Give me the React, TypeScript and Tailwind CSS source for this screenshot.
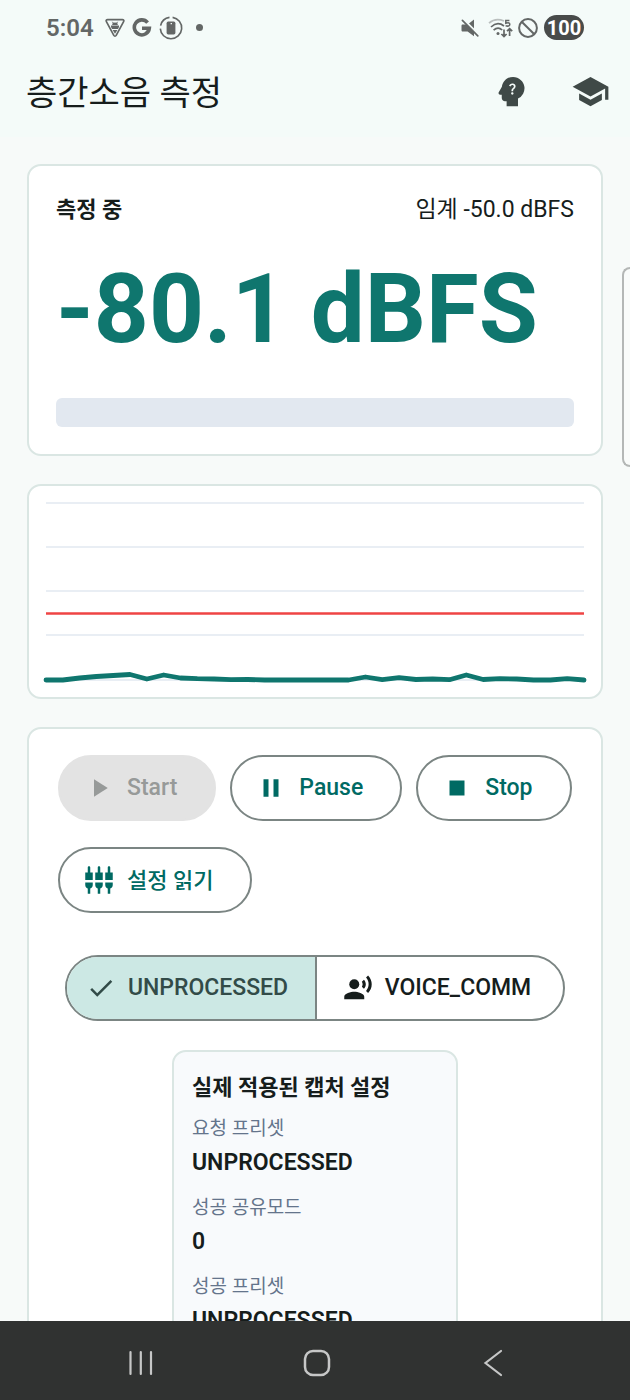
import {
  MdCheck,
  MdPause,
  MdPlayArrow,
  MdPsychologyAlt,
  MdRecordVoiceOver,
  MdSchool,
  MdSettingsInputComponent,
  MdStop,
} from "react-icons/md";
import type { ReactNode } from "react";

// Level history, as the y position inside the 177px high plot area
const LEVELS = [
  177, 177, 175, 173.5, 172.5, 171.5, 176, 172, 175, 175.7, 176, 176.7, 176.5,
  177, 177, 177, 177, 177, 177, 174, 176.7, 174.7, 176.5, 176, 176.7, 172,
  176.5, 175.7, 176, 177, 177, 175.7, 177,
];

const GRID_LINES = [0, 44, 88, 132, 177];

const CAPTURE_SETTINGS = [
  { label: "요청 프리셋", value: "UNPROCESSED" },
  { label: "성공 공유모드", value: "0" },
  { label: "성공 프리셋", value: "UNPROCESSED" },
];

function StatusBar() {
  return (
    <div className="flex h-[55px] shrink-0 items-center justify-between px-[46px] text-[#636766]">
      <div className="flex items-center gap-[7px]">
        <span className="mr-1 text-2xl font-semibold">5:04</span>
        <svg className="h-5 w-5" viewBox="0 0 20 20" fill="none" stroke="currentColor">
          <path
            d="M2.6 1.6h14.8c1.2 0 1.8 1 1.2 2L11.2 17.4c-.6 1-1.8 1-2.4 0L1.4 3.6c-.6-1 0-2 1.2-2z"
            strokeWidth="1.7"
          />
          <path d="M7.2 7a2.8 2.4 0 0 1 5.600 0zM6 7.600h8v1.400l-1 2H7l-1-2zM7.600 12h4.800L10 15.800z" fill="currentColor" stroke="none" />
          <path d="M7.4 3.800l1 1.4M12.6 3.800l-1 1.4" strokeWidth="1" />
        </svg>
        <svg className="h-5 w-5" viewBox="0 0 20 20" fill="none" stroke="currentColor" strokeWidth="3.6">
          <path d="M15.6 4.6A7.5 7.5 0 1 0 17.3 10.2H10" />
        </svg>
        <svg className="h-6 w-6" viewBox="0 0 24 24" fill="none" stroke="currentColor" strokeWidth="1.6">
          <path d="M13.6 1.4A10.7 10.7 0 1 1 1.3 12.6" />
          <path d="M1.6 9.6A10.7 10.7 0 0 1 10.5 1.4" />
          <rect x="7.6" y="5.6" width="8.8" height="12.8" rx="1.6" fill="currentColor" stroke="none" />
          <path d="M11.6 7.600h1.400" stroke="#f4fbf9" strokeWidth="1.2" />
        </svg>
        <span className="ml-1.5 h-[7px] w-[7px] rounded-full bg-[#636766]" />
      </div>

      <div className="flex items-center gap-1">
        <svg className="mr-0.5 h-5 w-5" viewBox="0 0 20 20" fill="currentColor">
          <path d="M8.6 5.8L14 1.6V12zM2.8 6.6h4L14 13.8v4.4L7.6 13.6H2.8c-.8 0-1.300-.5-1.300-1.300V7.900c0-.8.5-1.300 1.300-1.300z" />
          <path d="M3.6 1l15.600 15.600" stroke="#f4fbf9" strokeWidth="1.4" />
          <path d="M2.4 2.4l15.400 15.400" stroke="currentColor" strokeWidth="1.7" strokeLinecap="round" />
        </svg>
        <svg className="h-5 w-7" viewBox="0 0 28 20" fill="none" stroke="currentColor" strokeWidth="1.7">
          <path d="M3 5.2C7 1.6 13 1 18 3" opacity=".4" />
          <path d="M5 9C9 5.2 14 5 18 8M7.6 12.2c2.8-2.6 6-2.6 8.6-.2" />
          <circle cx="12" cy="15.4" r="1.5" fill="currentColor" stroke="none" />
          <path d="M18 11.6v6.8M15.4 16l2.6 2.6 2.6-2.6M23.6 18v-7M21 13.2l2.6-2.6 2.6 2.6" />
          <path d="M23.4 2.4h-3.6v2.800c3-.8 4-.2 4 1.200 0 1.700-2.300 2.200-4.200 1.200" strokeWidth="1.5" />
        </svg>
        <svg className="h-5 w-5" viewBox="0 0 20 20" fill="none" stroke="currentColor" strokeWidth="2">
          <circle cx="10" cy="10" r="8.9" />
          <path d="M3.7 3.7l12.6 12.6" />
        </svg>
        <span className="ml-0.5 flex h-[25px] w-10 items-center justify-center rounded-full bg-[#484b4a] text-xl leading-5 font-bold text-white">
          100
        </span>
      </div>
    </div>
  );
}

function AppBar() {
  return (
    <header className="flex h-[82px] shrink-0 items-start justify-between pl-[26px]">
      <h1 className="text-[34px] leading-[76px] font-normal">층간소음 측정</h1>
      <div className="flex text-[#3f4947]">
        <button type="button" aria-label="도움말" className="flex h-[72px] w-[79px] items-center justify-center">
          <MdPsychologyAlt className="h-[39px] w-[39px]" />
        </button>
        <button type="button" aria-label="학습" className="flex h-[72px] w-[79px] items-center justify-center">
          <MdSchool className="h-[39px] w-[39px]" />
        </button>
      </div>
    </header>
  );
}

function Card({ className, children }: { className: string; children: ReactNode }) {
  return (
    <section className={`rounded-[14px] border-2 border-[#dae6e3] bg-white ${className}`}>
      {children}
    </section>
  );
}

function LevelCard() {
  return (
    <Card className="p-[27px]">
      <div className="flex items-center justify-between leading-[34px]">
        <h2 className="text-[22px] font-bold">측정 중</h2>
        <span className="text-[23px]">임계 -50.0 dBFS</span>
      </div>
      <p className="mt-[26px] text-8xl leading-[112px] font-bold whitespace-nowrap text-[#0f766e]">
        -80.1 dBFS
      </p>
      <div className="mt-[33px] h-[29px] rounded-md bg-[#e2e8f0]" />
    </Card>
  );
}

function ChartCard() {
  const points = LEVELS.map((y, i) => `${(i * 538) / (LEVELS.length - 1)},${y}`).join(" ");

  return (
    <Card className="p-[17px]">
      <svg className="block w-full overflow-visible" viewBox="0 0 538 177" fill="none">
        {GRID_LINES.map((y) => (
          <path key={y} d={`M0 ${y}H538`} stroke="#e2e8f0" strokeWidth="1.7" />
        ))}
        <path d="M0 110.5H538" stroke="#ef4444" strokeWidth="2.5" />
        <polyline
          points={points}
          stroke="#0f766e"
          strokeWidth="4.8"
          strokeLinecap="round"
          strokeLinejoin="round"
        />
      </svg>
    </Card>
  );
}

function ActionButton({ icon, children, disabled }: { icon: ReactNode; children: ReactNode; disabled?: boolean }) {
  return (
    <button
      type="button"
      disabled={disabled}
      className="flex h-[66px] items-center gap-[13px] rounded-full border-2 border-[#7b8583] pr-[37px] pl-6 text-[23px] font-medium text-[#006a63] disabled:border-[#e3e3e3] disabled:bg-[#e3e3e3] disabled:text-[#979a99]"
    >
      {icon}
      {children}
    </button>
  );
}

function SourceToggle() {
  return (
    <div className="mx-auto mt-[42px] flex h-[66px] w-full max-w-[500px] overflow-hidden rounded-full border-2 border-[#7b8583] text-[23px] font-medium">
      <button
        type="button"
        aria-pressed="true"
        className="flex flex-1 items-center justify-center gap-3 border-r-2 border-[#7b8583] bg-[#cce8e4] pr-2 text-[#324b48]"
      >
        <MdCheck className="h-[30px] w-[30px]" />
        UNPROCESSED
      </button>
      <button type="button" aria-pressed="false" className="flex flex-1 items-center justify-center gap-3 pr-1.5">
        <MdRecordVoiceOver className="h-[30px] w-[30px]" />
        VOICE_COMM
      </button>
    </div>
  );
}

function CaptureSettings() {
  return (
    <div className="mx-auto mt-[29px] w-full max-w-[286px] rounded-[14px] border-2 border-[#dae6e3] bg-[#f8fafc] px-[18px] py-5">
      <h2 className="mb-[11px] text-[22px] leading-8 font-bold">실제 적용된 캡처 설정</h2>
      <dl>
        {CAPTURE_SETTINGS.map(({ label, value }) => (
          <div key={label} className="mb-[15px]">
            <dt className="text-[19px] leading-7 text-[#64748b]">{label}</dt>
            <dd className="mt-1 text-[23px] leading-8 font-semibold">{value}</dd>
          </div>
        ))}
      </dl>
    </div>
  );
}

function ControlsCard() {
  return (
    <Card className="px-[27px] pt-[26px] pb-8">
      <div className="flex flex-wrap gap-x-[14px] gap-y-[26px] pl-0.5">
        <ActionButton icon={<MdPlayArrow className="h-[30px] w-[30px]" />} disabled>
          Start
        </ActionButton>
        <ActionButton icon={<MdPause className="h-[30px] w-[30px]" />}>Pause</ActionButton>
        <ActionButton icon={<MdStop className="h-[30px] w-[30px]" />}>Stop</ActionButton>
        <ActionButton icon={<MdSettingsInputComponent className="h-[30px] w-[30px]" />}>
          <span className="text-[22px]">설정 읽기</span>
        </ActionButton>
      </div>
      <SourceToggle />
      <CaptureSettings />
    </Card>
  );
}

function NavigationBar() {
  return (
    <nav className="flex h-[79px] shrink-0 items-center bg-[#303231] pt-1 pr-[49px] pl-[53px] text-[#c6c7c7]">
      <button type="button" aria-label="최근 앱" className="flex flex-1 justify-center">
        <svg className="h-7 w-7" viewBox="0 0 28 28" stroke="currentColor" strokeWidth="2.2" strokeLinecap="round">
          <path d="M3.5 3v22M13.8 3v22M24 3v22" />
        </svg>
      </button>
      <button type="button" aria-label="홈" className="flex flex-1 justify-center">
        <svg className="h-7 w-7" viewBox="0 0 28 28" fill="none" stroke="currentColor" strokeWidth="2.5">
          <rect x="2" y="2" width="24" height="24" rx="8" />
        </svg>
      </button>
      <button type="button" aria-label="뒤로" className="flex flex-1 justify-center">
        <svg className="h-7 w-7" viewBox="0 0 28 28" fill="none" stroke="currentColor" strokeWidth="2.2" strokeLinecap="round">
          <path d="M22 2L6.5 14L22 26" />
        </svg>
      </button>
    </nav>
  );
}

export default function App() {
  return (
    <div className="relative flex h-screen flex-col overflow-hidden bg-[#f7faf9] font-['Roboto','Noto_Sans_CJK_KR',sans-serif] text-[#161d1c]">
      <div className="shrink-0 bg-[#f4fbf9]">
        <StatusBar />
        <AppBar />
      </div>
      <main className="flex min-h-0 flex-1 flex-col gap-7 overflow-hidden p-[27px] [&>*]:shrink-0">
        <LevelCard />
        <ChartCard />
        <ControlsCard />
      </main>
      <NavigationBar />
      {/* Edge panel handle */}
      <div className="absolute top-[267px] right-0 h-[200px] w-2 rounded-l-lg border-2 border-r-0 border-[#b4b7b6] bg-[#f9fbfa]" />
    </div>
  );
}
